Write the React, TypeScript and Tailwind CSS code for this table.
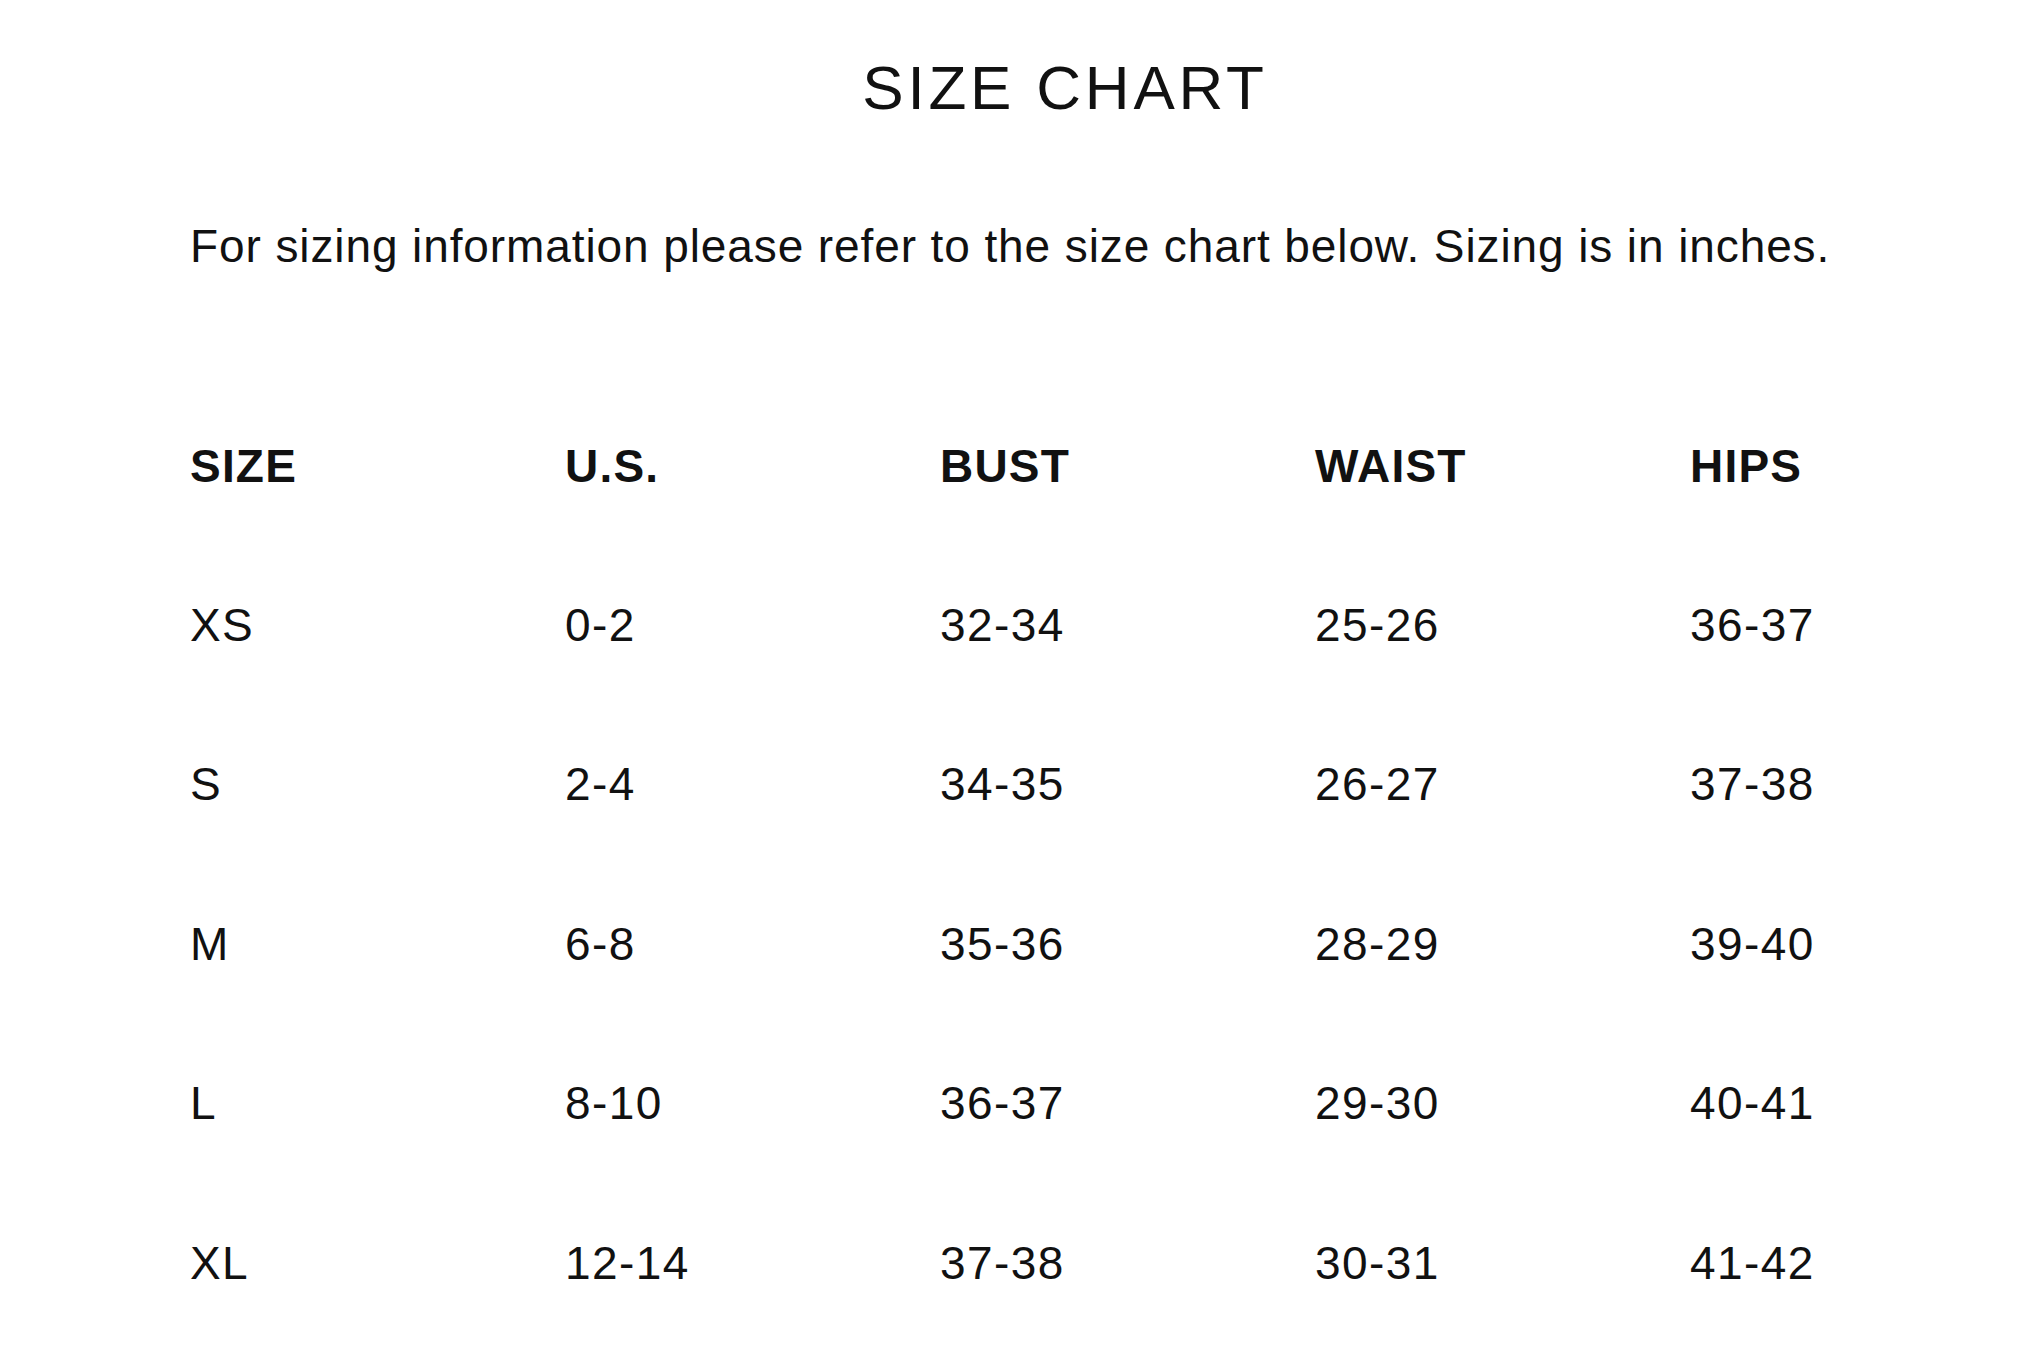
const HEADERS = ['SIZE', 'U.S.', 'BUST', 'WAIST', 'HIPS'];

const ROWS: string[][] = [
  ['XS', '0-2', '32-34', '25-26', '36-37'],
  ['S', '2-4', '34-35', '26-27', '37-38'],
  ['M', '6-8', '35-36', '28-29', '39-40'],
  ['L', '8-10', '36-37', '29-30', '40-41'],
  ['XL', '12-14', '37-38', '30-31', '41-42'],
];

function ChartRow({ cells, head = false }: { cells: string[]; head?: boolean }) {
  return (
    <div className="grid h-[159.4px] grid-cols-[375px_375px_375px_375px_auto] items-center">
      {cells.map((c, i) => (
        <span
          key={i}
          className={
            head
              ? 'text-[46px] leading-none font-bold tracking-[1.2px]'
              : 'text-[46px] leading-none tracking-[1.4px]'
          }
        >
          {c}
        </span>
      ))}
    </div>
  );
}

export default function App() {
  return (
    <div className="min-h-screen bg-white font-['Liberation_Sans',Arial,sans-serif] text-[#111]">
      <h1 className="pt-[57px] pl-[190px] pr-[90px] text-center text-[62px] leading-none tracking-[3.8px]">
        SIZE CHART
      </h1>
      <p className="mt-[104px] pl-[190px] text-[46px] leading-none tracking-[0.9px]">
        For sizing information please refer to the size chart below. Sizing is in inches.
      </p>
      <div className="mt-[117px] pl-[190px]">
        <ChartRow cells={HEADERS} head />
        {ROWS.map((r) => (
          <ChartRow key={r[0]} cells={r} />
        ))}
      </div>
    </div>
  );
}
